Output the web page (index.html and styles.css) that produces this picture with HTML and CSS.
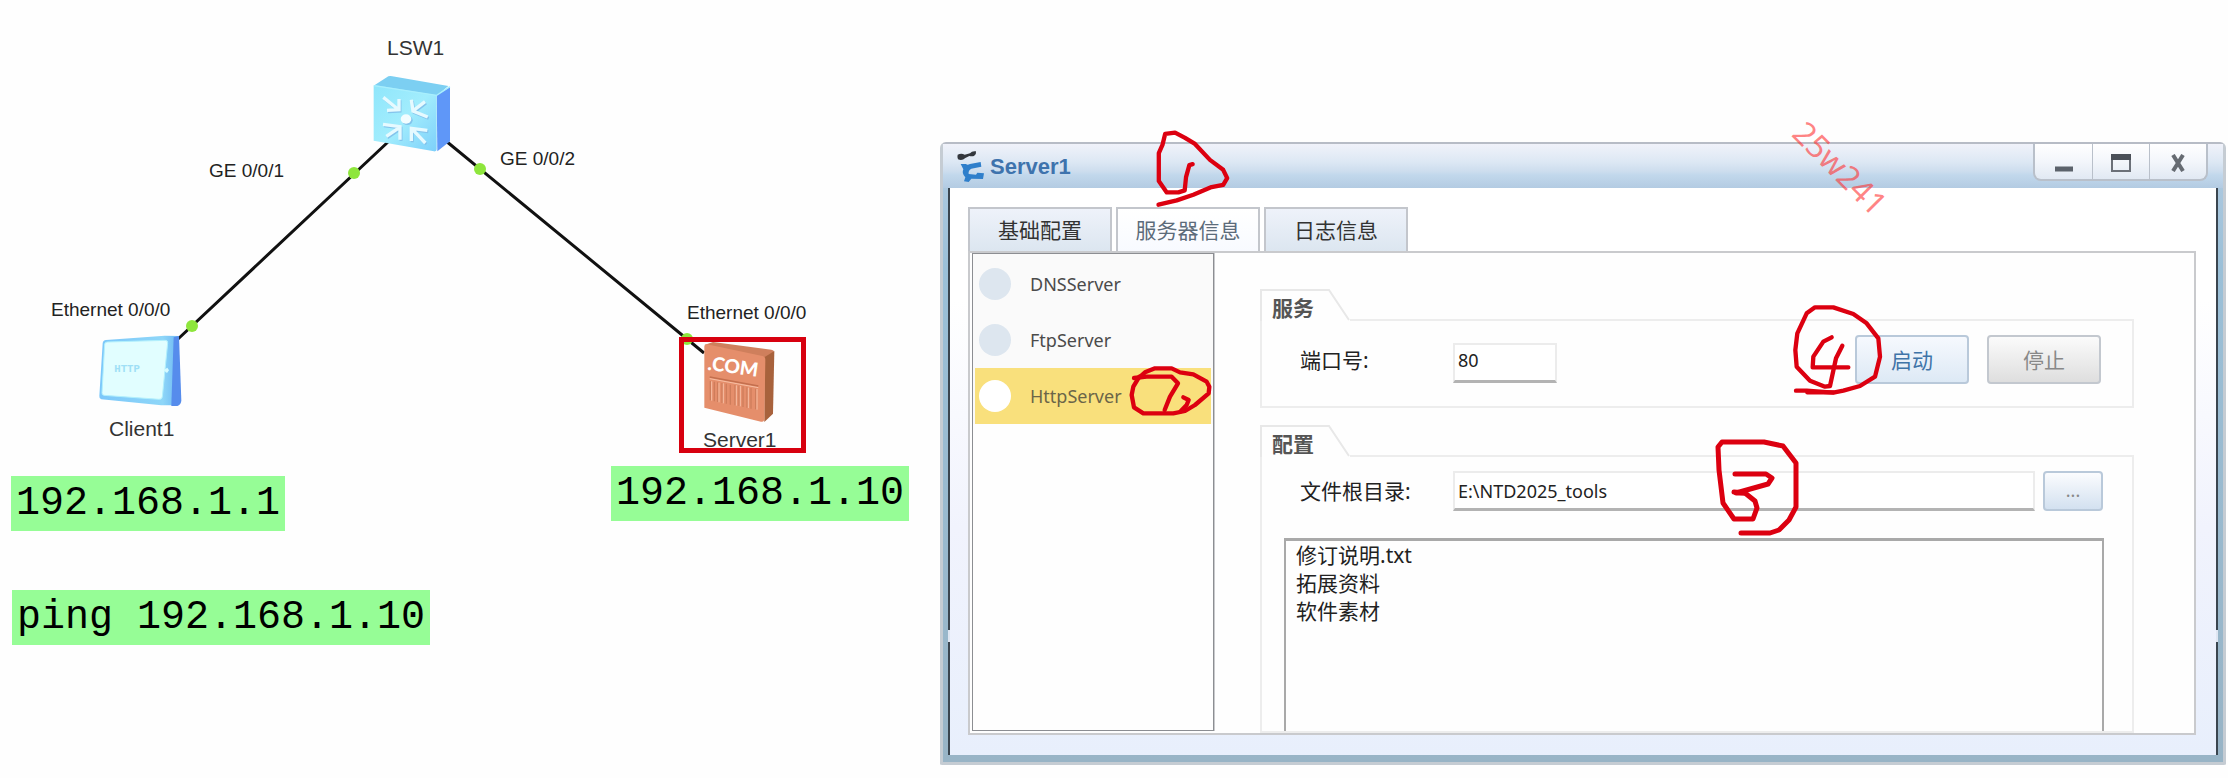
FILE: index.html
```html
<!DOCTYPE html>
<html lang="zh-CN">
  <head>
    <meta charset="UTF-8" />
    <meta name="viewport" content="width=device-width, initial-scale=1.0" />
    <title>Server1</title>
    <link rel="stylesheet" href="styles.css">
  </head>
  <body>
    <main class="page">
      <!-- Topology canvas -->
      <section class="topology">
        <svg class="wires" width="940" height="560">
          <path d="M388 142 L178 339 M446 141 L704 353" stroke="#111" stroke-width="3" fill="none" />
          <g fill="#8ee63c">
            <circle cx="354" cy="173" r="6" />
            <circle cx="192" cy="326" r="6" />
            <circle cx="480" cy="169" r="6" />
            <circle cx="687" cy="339" r="6" />
          </g>
        </svg>

        <span class="port port-ge1">GE 0/0/1</span>
        <span class="port port-ge2">GE 0/0/2</span>
        <span class="port port-client">Ethernet 0/0/0</span>
        <span class="port port-server">Ethernet 0/0/0</span>

        <div class="node node-switch">
          <span class="node-name">LSW1</span>
          <svg width="78" height="77" viewBox="0 0 234 231">
            <defs>
              <linearGradient id="switchFront" x1="0" y1="0" x2="1" y2="1">
                <stop offset="0" stop-color="#8fe6fb" />
                <stop offset=".5" stop-color="#a2edfd" />
                <stop offset="1" stop-color="#7dd0fa" />
              </linearGradient>
            </defs>
            <path d="M2 32 L46 4 Q52 2 58 4 L226 33 L191 62 Z" fill="#7ccff2" />
            <path d="M191 60 L231 36 V199 L193 229 Z" fill="#5f97f8" />
            <path d="M2 34 Q3 29 10 31 L191 61 V223 Q191 230 183 229 L2 197 Z" fill="url(#switchFront)" />
            <path d="M2 32 L191 61 L231 35" fill="none" stroke="#a9effd" stroke-width="4" />
            <g fill="none" stroke="#84c4ec" stroke-width="9" transform="translate(3 4)">
              <path d="M31 67 L74 102 M78 72 V104 L42 106 M156 80 L121 107 M115 74 L120 108 L164 126" />
              <path d="M40 184 L80 157 M30 148 L81 155 V194 M157 204 L116 161 M163 166 L115 160 V198" />
            </g>
            <g fill="none" stroke="#e6faff" stroke-width="10">
              <path d="M31 67 L74 102 M78 72 V104 L42 106 M156 80 L121 107 M115 74 L120 108 L164 126" />
              <path d="M40 184 L80 157 M30 148 L81 155 V194 M157 204 L116 161 M163 166 L115 160 V198" />
            </g>
            <ellipse cx="103" cy="136" rx="16" ry="14" fill="#84c4ec" />
            <ellipse cx="99" cy="132" rx="16" ry="14" fill="#f2fdff" />
          </svg>
        </div>

        <div class="node node-client">
          <svg width="84" height="74" viewBox="0 0 252 222">
            <defs>
              <linearGradient id="clientBody" x1="0" y1="0" x2="1" y2="0">
                <stop offset="0" stop-color="#7cc8fa" />
                <stop offset=".8" stop-color="#8ed6f8" />
                <stop offset="1" stop-color="#6cb7f3" />
              </linearGradient>
            </defs>
            <path d="M14 28 Q15 19 24 18 L200 5 L242 6 L240 214 L190 214 L10 196 Q3 194 4 186 Z" fill="url(#clientBody)" />
            <path d="M227 10 L243 6 L250 200 Q249 212 238 216 H220 Z" fill="#568cec" />
            <path d="M20 30 Q21 24 28 24 L202 19 Q210 19 209 27 L193 188 Q192 197 183 196 L18 184 Q11 183 12 176 Z" fill="#e1feff" stroke="#b2f0fd" stroke-width="3" />
            <text x="49" y="114" class="http-text">HTTP</text>
            <path d="M196 109 L208 101 L213 109 L207 117 Z" fill="#d5fbff" />
          </svg>
          <span class="node-name">Client1</span>
        </div>

        <div class="node node-server">
          <svg width="72" height="82" viewBox="0 0 216 246">
            <path d="M4 12 L30 3 L205 26 Q214 28 213 34 L184 52 Z" fill="#cf7f5c" />
            <path d="M184 49 L214 30 L210 218 L184 243 Z" fill="#a8623c" />
            <path d="M4 16 Q5 9 12 10 L178 45 Q187 47 187 56 L184 236 Q182 244 174 242 L4 200 Z" fill="#e58e6b" />
            <text x="12" y="86" class="com-text" transform="rotate(8 12 86)">.COM</text>
            <path d="M20 108 L166 135" stroke="#c46f4e" stroke-width="4" />
            <path d="M20 113 L166 140" stroke="#f7bfa4" stroke-width="3" />
            <path d="M22 120 V178 M34 122 V181 M44 124 V183 M57 126 V186 M70 128 V188 M82 131 V191 M96 132 V193 M108 134 V195 M120 136 V198 M132 139 V200 M144 141 V203 M158 143 V205" stroke="#cf7d5b" stroke-width="4" />
            <path d="M26 121 V179 M48 125 V184 M61 127 V187 M100 133 V194 M112 135 V196 M136 140 V201 M162 144 V206" stroke="#f7bfa4" stroke-width="3" />
          </svg>
          <span class="node-name">Server1</span>
        </div>

        <div class="highlight-box"></div>

        <span class="note note-client">192.168.1.1</span>
        <span class="note note-server">192.168.1.10</span>
        <span class="note note-ping">ping 192.168.1.10</span>
      </section>

      <!-- Server1 dialog -->
      <section class="window">
        <header class="title-bar">
          <svg class="app-icon" width="28" height="32" viewBox="0 0 84 96">
            <path d="M5 14 Q16 8 26 14 L42 10 Q48 2 60 4 Q62 12 54 18 Q46 20 40 18 L28 24 Q18 34 6 28 Q3 20 5 14 Z" fill="#33373d" />
            <path d="M14 42 L30 42 Q34 47 42 42 L74 36 L76 50 L46 56 Q36 62 38 72 L60 74 L64 68 L84 70 L81 87 L46 86 L38 96 L24 94 L28 82 Q16 70 22 58 Z" fill="#2f7fcb" />
          </svg>
          <h1>Server1</h1>
          <div class="window-controls">
            <button type="button" aria-label="Minimize">
              <svg width="18" height="20"><path d="M0 16 H18" stroke="#5b626b" stroke-width="5" /></svg>
            </button>
            <button type="button" aria-label="Maximize">
              <svg width="20" height="18"><path d="M1 1 H19 V17 H1 Z" fill="none" stroke="#6b7078" stroke-width="2" /><path d="M0 3 H20" stroke="#4b5058" stroke-width="6" /></svg>
            </button>
            <button type="button" aria-label="Close">
              <svg width="16" height="18"><path d="M3 1 L13 17 M13 1 L3 17" stroke="#666b72" stroke-width="4" /></svg>
            </button>
          </div>
        </header>

        <div class="window-edge">
          <div class="client-area">
            <div class="tabs">
              <button type="button" class="tab">基础配置</button>
              <button type="button" class="tab active">服务器信息</button>
              <button type="button" class="tab">日志信息</button>
            </div>

            <div class="panel">
              <nav class="server-list">
                <button type="button" class="server-item"><span class="dot"></span>DNSServer</button>
                <button type="button" class="server-item"><span class="dot"></span>FtpServer</button>
                <button type="button" class="server-item selected"><span class="dot"></span>HttpServer</button>
              </nav>

              <div class="settings">
                <section class="group">
                  <div class="group-head">
                    <h2>
                      <svg width="90" height="32"><path d="M1 32 V1 H69 L89 31" fill="none" stroke="#e8e8e8" stroke-width="2" /></svg>
                      <span>服务</span>
                    </h2>
                  </div>
                  <div class="group-body">
                    <div class="row">
                      <label for="port">端口号:</label>
                      <input type="text" id="port" class="port-input" value="80" />
                      <button type="button" class="btn btn-start">启动</button>
                      <button type="button" class="btn btn-stop">停止</button>
                    </div>
                  </div>
                </section>

                <section class="group group-fill">
                  <div class="group-head">
                    <h2>
                      <svg width="90" height="32"><path d="M1 32 V1 H69 L89 31" fill="none" stroke="#e8e8e8" stroke-width="2" /></svg>
                      <span>配置</span>
                    </h2>
                  </div>
                  <div class="group-body">
                    <div class="row">
                      <label for="root">文件根目录:</label>
                      <input type="text" id="root" class="root-input" value="E:\NTD2025_tools" />
                      <button type="button" class="btn btn-browse">...</button>
                    </div>
                    <ul class="file-list">
                      <li>修订说明.txt</li>
                      <li>拓展资料</li>
                      <li>软件素材</li>
                    </ul>
                  </div>
                </section>
              </div>
            </div>
          </div>
        </div>
      </section>

      <!-- Pen marks over the dialog -->
      <svg class="mark mark-1" width="75" height="78" viewBox="675 30 225 235">
        <path d="M788 133 L778 136 L768 172 L764 212 L745 218 L710 218 L686 184 L686 100 L697 75 L705 42 L735 38 L765 54 L795 72 L840 120 L880 150 L892 175 L880 195 L845 202 L790 225 L740 242 L685 255" />
      </svg>
      <svg class="mark mark-2" width="84" height="51" viewBox="597 735 252 153">
        <path d="M612 774 L650 770 L725 770 L744 790 L720 830 L704 870" />
        <path d="M628 772 L645 757 L675 745 L725 745 L750 757 L790 763 L830 785 L838 800 L836 820 L795 855 L765 873 L730 880 L640 880 L612 862 L605 825 L610 800 L628 770" />
        <path d="M760 832 L776 840 L770 855 L752 874" />
      </svg>
      <svg class="mark mark-3" width="95" height="104" viewBox="1710 436 95 104">
        <path class="thin" d="M1735 474 H1766 L1772 478 L1768 484 L1736 493 L1745 493 L1755 501 L1757 508 L1753 519 H1734 L1723 503 L1719 470 L1718 447 L1722 442 H1764 L1783 446 L1796 463 V507 L1789 520 L1779 530 L1770 533 H1741" />
        <path d="M1734 492 L1745 493" class="thin" />
      </svg>
      <svg class="mark mark-4" width="91" height="94" viewBox="39 579 273 282">
        <path d="M48 842 L80 842 L160 848 L190 842 L240 828 L285 800 L300 740 L295 685 L260 640 L220 612 L160 592 L105 592 L80 610 L52 670 L46 720 L50 770 L90 812 L135 830 L150 828 L168 745 L187 707" />
        <path d="M155 682 L130 695 L100 740 L98 772 L205 772 M82 847 H160" />
      </svg>
      <span class="watermark">25w241</span>
    </main>
  </body>
</html>
```

FILE: styles.css
```css
* {
  margin: 0;
  padding: 0;
  box-sizing: border-box;
}

body {
  background-color: #fefefe;
  font-family: "Noto Sans", "Noto Sans CJK SC", sans-serif;
  font-size: 18px;
  color: #222;
}

button,
input {
  font-family: inherit;
  font-size: inherit;
}

.page {
  position: relative;
  display: flex;
  min-height: 100vh;
  overflow: hidden;
}

/* Topology */
.topology {
  position: relative;
  flex: 0 0 940px;
  font-family: "Liberation Sans", Arial, sans-serif;
}

.wires {
  position: absolute;
  left: 0;
  top: 0;
}

.port {
  position: absolute;
  font-size: 19px;
  line-height: 24px;
  white-space: nowrap;
}

.port-ge1 {
  left: 209px;
  top: 159px;
}

.port-ge2 {
  left: 500px;
  top: 147px;
}

.port-client {
  left: 51px;
  top: 298px;
}

.port-server {
  left: 687px;
  top: 301px;
}

.node {
  position: absolute;
  display: flex;
  flex-direction: column;
}

.node-name {
  font-size: 21px;
  line-height: 24px;
  color: #333;
}

.node-switch {
  left: 373px;
  top: 36px;
  gap: 15px;
}

.node-switch .node-name {
  padding-left: 14px;
}

.node-client {
  left: 98px;
  top: 334px;
  gap: 9px;
}

.node-client .node-name {
  padding-left: 11px;
}

.node-server {
  left: 703px;
  top: 341px;
  gap: 5px;
}

.http-text {
  font: bold 32px "Liberation Mono", monospace;
  fill: #9fe0f6;
}

.com-text {
  font: 900 58px Lato, "Liberation Sans", sans-serif;
  fill: #fff;
}

.highlight-box {
  position: absolute;
  left: 679px;
  top: 337px;
  width: 127px;
  height: 116px;
  border: 5px solid #d7000f;
}

.note {
  position: absolute;
  padding: 0 5px;
  background-color: #96fd96;
  color: #000;
  font-family: "Liberation Mono", Consolas, monospace;
  font-size: 40px;
  line-height: 55px;
  white-space: nowrap;
}

.note-client {
  left: 11px;
  top: 476px;
}

.note-server {
  left: 611px;
  top: 466px;
}

.note-ping {
  left: 12px;
  top: 590px;
}

/* Dialog window */
.window {
  flex: 1;
  display: flex;
  flex-direction: column;
  margin: 142px 2px 13px 0;
  border: 3px solid #c5ccd3;
  border-top: 2px solid #b7bcc6;
  border-radius: 6px 6px 2px 2px;
  background: linear-gradient(#b3cce2, #9bc0d8 20%, #98b4c6);
}

.title-bar {
  display: flex;
  align-items: flex-start;
  height: 44px;
  padding-left: 13px;
  background: linear-gradient(#f0f2fa, #dde8f4 40%, #cdddee 62%, #c2d8ec 70%, #b3cbe2);
}

.app-icon {
  margin-top: 6px;
}

.title-bar h1 {
  flex: 1;
  margin-left: 6px;
  font: bold 22px/46px "Liberation Sans", Arial, sans-serif;
  color: #3e73ad;
}

.window-controls {
  display: flex;
  margin-right: 15px;
  border: 2px solid #b9c0ca;
  border-top: none;
  border-radius: 0 0 8px 8px;
  background: linear-gradient(#fff, #f3f6fb 50%, #e1e9f3);
}

.window-controls button {
  display: flex;
  align-items: center;
  justify-content: center;
  width: 57px;
  height: 35px;
  padding-top: 2px;
  border: none;
  background: none;
}

.window-controls button + button {
  border-left: 1px solid #b9c0ca;
}

.window-edge {
  flex: 1;
  display: flex;
  margin: 0 5px 7px;
  padding: 0 2px;
  background: linear-gradient(#3a454f 78%, #dfe6f2 78%, #dfe6f2 80%, #3a454f 80%);
}

.client-area {
  flex: 1;
  display: flex;
  flex-direction: column;
  padding: 19px 20px 20px 18px;
  background: linear-gradient(#fff 20%, #f1f3fd 60%, #e8effc);
}

.tabs {
  display: flex;
  gap: 4px;
}

.tab {
  width: 144px;
  height: 44px;
  padding-bottom: 3px;
  border: 2px solid #c3c6cc;
  border-bottom: none;
  background: linear-gradient(#eef2fa, #dce6f0);
  font-size: 21px;
  color: #333;
}

.tab.active {
  background: linear-gradient(#fff, #f8faff);
  color: #5c6b7a;
}

.panel {
  flex: 1;
  display: flex;
  border: 2px solid #c9cacd;
  background-color: #fefefe;
}

.server-list {
  width: 242px;
  margin: 0 1px 2px 2px;
  padding: 2px;
  border: 1px solid #8c8e92;
  box-shadow: 1px 0 0 #c9cacd;
  background: linear-gradient(#fafafa 170px, #fefefe 170px);
}

.server-item {
  display: flex;
  align-items: center;
  gap: 19px;
  width: 100%;
  height: 56px;
  padding-left: 4px;
  border: none;
  background: none;
  color: #4b4b4b;
}

.server-item .dot {
  width: 32px;
  height: 32px;
  border-radius: 50%;
  background-color: #dde6ef;
}

.server-item.selected {
  background-color: #f9e07c;
  color: #6b6548;
}

.server-item.selected .dot {
  background-color: #fff;
}

.settings {
  flex: 1;
  display: flex;
  flex-direction: column;
  gap: 17px;
  padding: 36px 60px 0 45px;
}

.group {
  display: flex;
  flex-direction: column;
}

.group-head {
  display: flex;
  height: 32px;
}

.group-head::after {
  content: "";
  flex: 1;
  border: 2px solid #ededed;
  border-width: 2px 2px 0 0;
  margin-top: 30px;
}

.group-head h2 {
  position: relative;
  width: 90px;
  padding-left: 12px;
  font-size: 21px;
  line-height: 38px;
  font-weight: bold;
  color: #555;
}

.group-head h2 svg {
  position: absolute;
  left: 0;
  top: 0;
}

.group-body {
  display: flex;
  flex-direction: column;
  gap: 27px;
  padding: 14px 28px 22px 22px;
  border: 2px solid #ededed;
  border-top: none;
}

.group-fill,
.group-fill .group-body {
  flex: 1;
}

.group-fill .group-body {
  padding-bottom: 0;
}

.row {
  display: flex;
  align-items: center;
  padding: 0 1px 0 16px;
}

.row label {
  width: 153px;
  font-size: 21px;
  line-height: 38px;
  color: #222;
}

.row input {
  height: 40px;
  padding: 0 3px;
  border: 2px solid #ececec;
  border-bottom: 3px solid #b3b3b3;
  background-color: #fff;
  color: #222;
}

.row .port-input {
  width: 104px;
  margin-top: 6px;
  padding-bottom: 4px;
}

.root-input {
  flex: 1;
  min-width: 0;
}

.btn {
  padding-bottom: 2px;
  border: 2px solid #c3c8cf;
  border-radius: 4px;
  font-size: 21px;
}

.btn-start,
.btn-stop {
  width: 114px;
  height: 49px;
}

.btn-start {
  margin-left: auto;
  border-color: #b9c9da;
  background: linear-gradient(#f6f9fe, #dde9f5);
  color: #3f74a8;
}

.btn-stop {
  margin: 0 2px 0 18px;
  background: linear-gradient(#fbfbfb, #dedede);
  color: #888;
}

.btn-browse {
  width: 60px;
  height: 40px;
  margin-left: 8px;
  border-color: #b9c9da;
  background: linear-gradient(#fbfcfe, #d3e1f0);
  font-size: 18px;
  color: #888;
}

.file-list {
  flex: 1;
  padding: 0 10px;
  border: 2px solid #a9a9a9;
  border-top-width: 3px;
  border-bottom: none;
  list-style: none;
  font-size: 21px;
  line-height: 28px;
}

/* Pen marks */
.mark {
  position: absolute;
  pointer-events: none;
}

.mark path {
  fill: none;
  stroke: #dc0010;
  stroke-width: 13;
  stroke-linejoin: round;
  stroke-linecap: round;
}

.mark .thin {
  stroke-width: 5;
}

.mark-1 {
  left: 1155px;
  top: 130px;
}

.mark-2 {
  left: 1129px;
  top: 365px;
}

.mark-3 {
  left: 1710px;
  top: 436px;
}

.mark-4 {
  left: 1793px;
  top: 303px;
}

.watermark {
  position: absolute;
  left: 1782px;
  top: 148px;
  font-size: 32px;
  line-height: 40px;
  color: rgba(255, 50, 50, 0.6);
  transform: rotate(45deg);
}
```
